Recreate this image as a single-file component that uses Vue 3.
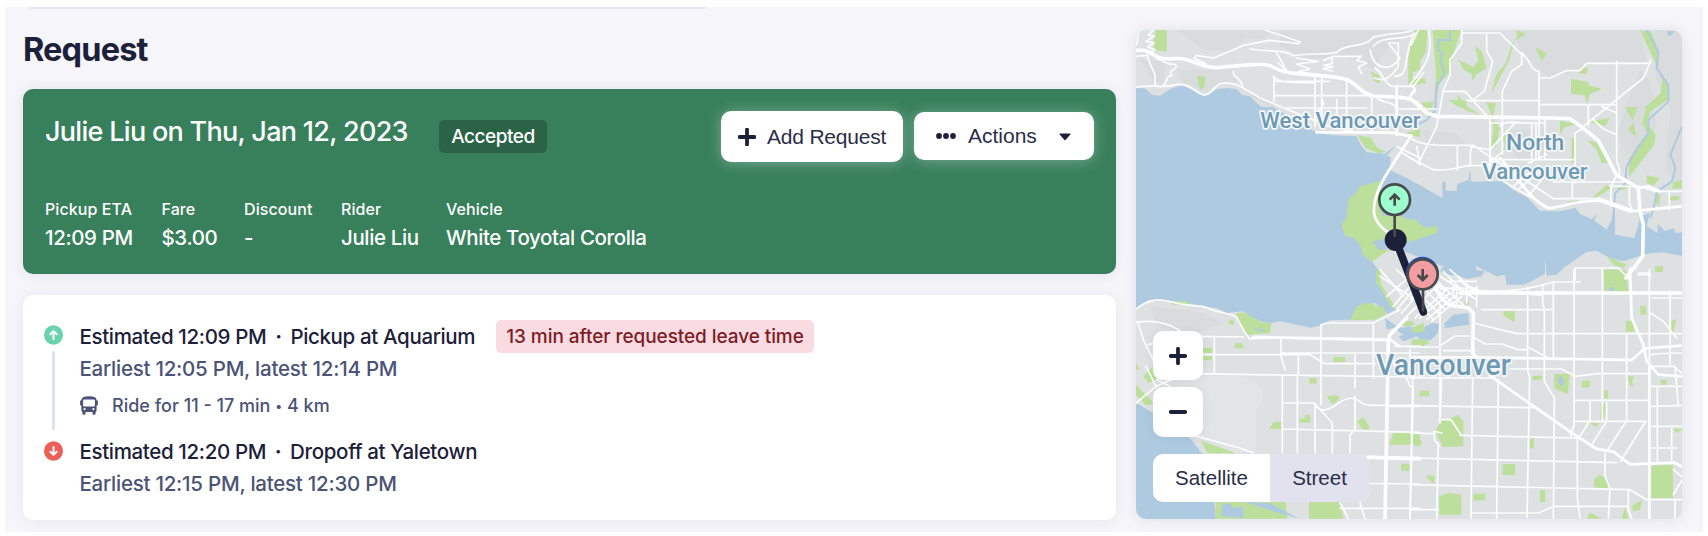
<script setup>
const details = [
  { label: 'Pickup ETA', value: '12:09 PM', width: 88.5 },
  { label: 'Fare', value: '$3.00', width: 54.5 },
  { label: 'Discount', value: '-', width: 69 },
  { label: 'Rider', value: 'Julie Liu', width: 77 },
  { label: 'Vehicle', value: 'White Toyotal Corolla', width: 200 },
]

// Map geometry is split into four tiles, each with its own origin.
const tiles = [
  {
    id: 'nw',
    move: 'translate(0 0)',
    hills: [
      'M170 31 460 31 430 60 380 55 330 95 250 90 210 60Z',
      'M480 31 880 31 800 90 760 150 680 110 560 120 480 80Z',
      'M60 120 140 125 130 190 100 185Z',
      'M170 150 330 150 360 185 300 190 260 215 190 190Z',
      'M365 215 400 235 450 262 480 258 430 235Z',
    ],
    parks: [
      'M108 31h33v65l-40-5V60Z', 'M232 168l24 5-2 28-14 10-6-25Z', 'M48 203l20-2-8 6Z',
      'M748 153l28 14 6 24-18-5-4-14Z', 'M712 346l40 8 20 30 25 12-20 5-40-15Z',
      'M885 50 L900 35V150l-22 8-2 22 24-4v18l-35 2V110Z', 'M860 338l40-10v25l-30-6Z',
      'M785 483 720 500 708 520 685 540 680 590 665 620 675 648 703 655 722 680 730 705 755 727 800 695 840 690 775 690 758 665 800 656 870 664 900 650 950 640 952 622 915 625 885 600 860 598 835 585 790 590 775 560Z',
    ],
    minor: [
      'M60 31c-15 25 0 30-12 45M100 31l-15 15 18 4-25 15 25 5-20 12 22 8-20 12',
      'M48 110l35-3c0 20 15 35 22 60v30M110 118c30 8 35 20 55 15 15 20-25 15-10 35-20 0-10 20-25 28',
      'M48 203c60-10 80 5 120-8 45-5 60 25 80 30 30 5 35-35 62-35 40-2 60 15 110 45l200 83 90 20 120 4',
      'M435 31l106 36-5 5-90-10-75 15-90 38-53-8-5 10 35 15',
      'M390 88c60 10 100 0 130 20 60-10 80 0 130-10 30-30 80-10 110-45 50-15 100-10 118-22',
      'M470 100l15 25 15 30-25-25M530 115l65 10-65 8 40 15-35 8 60 12',
      'M610 122l25-10 2 20-25 5 27 5-30 5 28 7M640 110l85 0-15 12 30 8-25 12 10 20',
      'M750 90c10 60 60 70 90 25l-35-45 30 0 0 70c-20 30-40 50-70 35',
      'M765 145c30 20 20 40 50 55h65l30-40M885 40c-40 60-10 130-60 130M880 45c-40 20-90 0-120 35',
      'M340 155c-5 20 30 20 27 48M462 170v75M462 185h165M462 228h290M500 265h240M460 170c20 25 60 15 120 20M585 170v150M605 170v150M680 180v155M755 225v110M770 232c10 20 50 10 60 35M605 240c20 20-20 30-20 60M650 240v70M830 268h70M880 200l6 15-25 25M830 380l70 35M848 400l52 32M890 380l10 55',
    ],
    major: ['M48 92c60-5 40 30 110 25 60-5 70 25 130 27 80-7 130-14 165-6 45 35 150 20 230 42 45 25 30 35 75 49 90 5 115 0 142 30', 'M590 338h225l45 10 15 0M830 200v145', 'M872 350c-50 85-115 155-110 230 5 30 25 50 60 70'],
  },
  {
    id: 'ne',
    move: 'translate(870 0)',
    hills: [
      'M310 31h380l20 95H530l-35 35-80 10-25-20-60-60Z',
      'M690 150l30 35 20 130-30 60-60 30-30-60 40-120Z',
      'M735 31h81v480l-50-60 15-180-45-100Z',
      'M290 335l100-10 50 30-40 70-80-10Z', 'M30 330l110 10 40 45-130-10Z',
    ],
    parks: [
      'M15 31h38l-5 65-30 50 -18 20V80Z', 'M68 31h85l-25 80-10 50-30 30-15 70 5-100Z', 'M0 180l45-4 2 14-47 4Z', 'M30 250l40-5-5 30Z',
      'M320 31l28 12-35 22-15 55-55 105 15-60 30-35 15-50 20-30Z', 'M145 120l45 22 15-20-10-42 20 15 15 50-32 20-12 20 0-22-25-12Z',
      'M376 82l35 20-15 22-8-14Z', 'M483 178l50 8 5 12 30 8 8 3-35 13-10 30-8-25-40-5Z', 'M505 160l12-18 17 3-5 18Z',
      'M115 240l30 2-5-20 15 18 15 5 0 15 40 25-30-8-45-22Z', 'M228 248l30 3-10 50 22 20-12 60-15 0 8-55-10-50Z', 'M285 335l12 15-20 60-12 0 20-30-10-30Z',
      'M450 303l50 10-35 10-15 20Z', 'M535 305l65-10-15 25Z', 'M485 355h8v75h-8ZM530 360l30 10 35 60-20 0-15-40Z',
      'M690 31l35 5 22 65-3 55 28 30 8 50-60 40-8 35 25 35-5 30-75 95 0-55 55-75-15-30 10-50 45-40 5-40-25-60Z',
      'M645 262h38l-15 40 12 50-25-20 15-25Z', 'M710 466l40 10-20 22-20-8ZM790 488l26-8v25l-30 3ZM780 530h28v12h-28ZM736 520l16 5-5 35-10-10Z', 'M590 495l-45 40 20-5 40-25ZM610 502l60-10-30 20ZM465 550l40-10-10 8Z',
      'M0 600l45 25 37-6-2 22-80 25Z', 'M590 710l60 25-10 10-30-10ZM735 740h24v17h-24Z', 'M582 750h60v28h-60Z',
    ],
    minor: [
      'M55 31c20 80-20 120-55 165M25 31L5 75M155 31v40l-35 50 0 45-20 45-20 110-55 110M155 40h115l65 65v30l-30 20-28 60v190M230 40v55l18 30-25 90-40 30',
      'M335 100c35 30 20 50 52 55v265M390 175h30l50-22h40l20-22h190l2-10M620 125v300l8 20v20M720 130l-20 45-180 145M100 215h65l75 85v160M170 243h220M390 255h230M535 258v60M550 300l30 28 35 15M495 490V340l20-12M575 260l45 20M0 195l15 12-15 20M0 268h80',
      'M240 310h160M270 320c15-20 50-10 95-10v120M378 310v110M405 300v120M240 420h255M0 355c40 25 80 22 190 22l60 40 180 120h140l110 38M180 380l60 10v55M142 380v70M0 415l70 35c50 5 60-5 105-12h60M185 385c-10 20 0 30-5 50M280 395l-60 50M240 390l75-80M430 487h220M487 487v45M603 560v-60l15-30M658 500v50l10 25M778 515v55M600 500h90l45 15h81M355 430l55-25M310 500l70-60M325 510l75-65M355 530l60-75M280 485l130 75',
      'M685 573l131-15M495 780v-35h130l35 35M660 745h20M685 765h35',
    ],
    major: ['M0 235l50 45 30 10 350 5 50 2 35 25 50 40 55 105 65 38 5 70 10 40-2 95-50 65', 'M270 415c50 55 110 150 150 150 50-5 70-22 150-22l90 32 156-15M685 505l30-5 35 15'],
  },
  {
    id: 'sw',
    move: 'translate(0 750)',
    hills: ['M90 110l160 20 60 30-80 30-120-20Z'],
    parks: [
      'M145 95h55l10 8-50 2Z', 'M345 133l25-5 60 32 25 0-5 30-70 6-15-28Z', 'M327 150h14v15h-14Z', 'M343 220h22l8 16h-28Z',
      'M240 235h37v14h-37ZM245 258h30v14h-30Z', 'M640 262h35v15h-35ZM568 325h22v17h-22ZM620 378l38 0-3 12-18 15Z', 'M536 448l18-2 0-10h17v23h-30Z', 'M448 477l13-20h22v22ZM712 455l18-12 18 28-3 10-20-4Z',
      'M820 490h80v35h-92ZM843 583h25v20h-25Z', 'M243 513l105 38h-85ZM287 695h210l5 52H287Z', 'M567 695h95l8 52H567Z', 'M690 152l20-42 25-10 30 2 0 8 25 0 6 25-30 15Z', 'M48 345l55 57-25 5-30-30ZM70 320l30-30 10 40-25 10Z',
      'M770 0h12v40l48 80-15-5-35-60-12-15ZM835 158l40-5 10 12-30 6ZM48 280l10 20-10 0Z', 'M875 210l40-2 15 15-55 2Z',
    ],
    minor: [
      'M48 118c70-55 90-10 200-8 60 25 80 20 100 30l25 45 15 22 75-2 345 8M48 158c85-12 130 22 150 40M52 155l20 60 30 60M78 290l30 60M48 400l60-50 90-40M110 330l40 20M85 225l60-15M210 200l160 2',
      'M235 255h335l25 15 20 12 150 0M205 312l695 10M283 205v105M483 205v55l12 40M487 320v230M532 320v230M535 255v60M603 165v240M605 165l15-5h140v165M705 255v100M705 380v100l-15 15v55M482 250h415M487 400h95l55 60v90M585 400v150M580 400c40 55 70-15 115-15 40 10 20 20 60 22h145M487 478l413 10M745 560l155 5M600 640l300 3M660 716h240M660 700l25 47M720 700l15 47M230 500l130 35 40 15M802 410h98M820 270c0 45 40 35 50 80l10 0-10 397M760 160l80-40M825 230h75',
      'M780 20l120 80M780 0l70 80M820 110l50-60M830 0l70 65M800 80l70-60M830 120l60-70M845 130l55-65M860 140l40-40',
    ],
    major: ['M860 145l-50 50-5 15-10 537M745 563l155 4', 'M400 202l410 8 30 20'],
  },
  {
    id: 'se',
    move: 'translate(870 750)',
    hills: [],
    parks: [
      'M280 125h35l-2 33-32-20ZM163 97l14-2v10h-14Z', 'M583 0h65l7 65h-72ZM690 110h17l3 25h-18ZM648 153h20l5 33h-25ZM785 152l14-3-10 45h-5Z', 'M5 175l35-15 5 25-35 5ZM5 210h48l-10 18-35-3Z',
      'M432 314l48-2-7 62-40-18ZM516 333h24v20h-24ZM367 318h30v12h-30ZM652 320h20l-6 15 5 18-10-5ZM582 362h12v25h-12ZM573 400l14 5-4 40-12 5Z', 'M752 330l18 0v15h-18ZM538 460l30 0-10 12Z',
      'M30 363h28v17H28Z', 'M75 485l20-35 20 0 28-15 17 20v75l-62 2Z', 'M12 512h22v16H12ZM360 508l12-4v32h-12ZM278 583h37v33h-37ZM48 618h25v24l-15-10Z', 'M88 680l30-10 36 5v60H88ZM190 672h36v20h-36ZM390 662h15v35h-15Z',
      'M552 630l15-15 20 10 8 32-43-5ZM530 747l10-18 35 18ZM635 747l10-35 10 35ZM665 710l30-20-5 30-20 5Z', 'M724 588l65-3v100h-65ZM790 477h28l-20 14Z', 'M735 0h24v7h-24Z',
    ],
    minor: [
      'M185 68h230M100 55c150 20 260 5 330-18h80M215 120h215M100 5l60 60M190 160l130 32h496M195 205l30 18h50l50 17h25M100 243h95M0 232h85l50-33h55M120 0l80 70M0 240v27M90 110v350M200 50v60',
      'M353 55v250l6 18-8 420M398 45v60l5 10v220l30 50-3 362M430 37v230M492 0v465l-10 35M577 0v450M350 230l70 38M650 195v260M718 0v350M780 65v220M720 130l40 25 40 50M725 85h91M685 10h35v10',
      'M300 298h155l40 22 70-8h155M0 325h250M0 408l370 6M0 490l70 2M150 497l350 8M0 565l620 14M0 645l660 15 50 30h106M0 720h85M185 730h200l45-20h225',
      'M265 330l-5 417M188 325l-5 420M95 325l-5 120M85 520l-5 227M8 325l-8 422M492 392h225M540 395v60M590 400v55l-45 70M492 455h215l-75 120M645 460l-55 85M535 460l-25 40M502 505v180l8 60M585 550v70l15 35-5 90M655 660v60l10 27',
      'M720 350h96M720 410l96-3M720 470h96M720 535h80M742 350v225M785 475v100M795 290l10 120M730 290h60l26 20M720 255c30-5 60-5 96-5M790 600l30 25-30 50M795 690v57',
      'M95 490l-22-5 0 25 15 20M88 450h35l30 45M0 130l90-90M15 145l95-85M0 90l70-65M30 145l90-75M50 150l90-75M65 155l90-75M75 30l85 75M65 45l75 65M45 60l60 60M35 80l55 55M20 95l50 55M90 20l110 70M110 35h90M110 55h90M140 65v40M170 55v45M130 45v40',
    ],
    major: ['M150 70h666M105 60c-30-20-35-10-20 10 30 50 50 35 90 45l15 15-2 120 10 12', 'M0 263h190l475 8 40-35 111-8M240 318l250 175 70 45 50 8 50 38 135-5 21 12', 'M660 0l5 145 35 80 10 50 35 40 71 5M718 295v450', 'M150 30c50 55 100 30 240 45'],
  },
]
</script>

<template>
  <div class="page">
    <main class="shell">
      <div class="top-rule"></div>
      <div class="content">
        <h1>Request</h1>

        <section class="summary">
          <div class="summary-head">
            <h2>Julie Liu on Thu, Jan 12, 2023</h2>
            <span class="status">Accepted</span>
            <button class="btn add">
              <svg width="18" height="18" viewBox="0 0 18 18"><path d="M9 1.5v15M1.5 9h15" /></svg>
              <span>Add Request</span>
            </button>
            <button class="btn actions">
              <svg class="dots" width="20" height="8" viewBox="0 0 20 8"><circle cx="3" cy="4" r="2.9" /><circle cx="10" cy="4" r="2.9" /><circle cx="17" cy="4" r="2.9" /></svg>
              <span>Actions</span>
              <svg class="caret" width="12" height="8" viewBox="0 0 12 8"><path d="M1 .5h10q1 0 .3.9L6.8 6.8q-.8.8-1.6 0L.7 1.4Q0 .5 1 .5Z" /></svg>
            </button>
          </div>
          <dl class="details">
            <div v-for="d in details" :key="d.label" :style="{ width: d.width + 'px' }">
              <dt>{{ d.label }}</dt>
              <dd>{{ d.value }}</dd>
            </div>
          </dl>
        </section>

        <section class="trip">
          <div class="rail">
            <svg width="19" height="20" viewBox="0 0 19 20"><ellipse cx="9.5" cy="10" rx="9.5" ry="9.8" fill="#6ad3ae" /><path d="M9.5 14V6.2M6.3 9.3l3.2-3.2 3.2 3.2" class="arrow" /></svg>
            <i></i>
            <svg width="19" height="20" viewBox="0 0 19 20"><ellipse cx="9.5" cy="10" rx="9.5" ry="9.8" fill="#ea6058" /><path d="M9.5 6v7.8M6.3 10.7l3.2 3.2 3.2-3.2" class="arrow" /></svg>
          </div>
          <div class="stops">
            <div class="stop">
              <span class="stop-title">Estimated 12:09 PM<b>·</b>Pickup at Aquarium</span>
              <span class="late">13 min after requested leave time</span>
            </div>
            <div class="window">Earliest 12:05 PM, latest 12:14 PM</div>
            <div class="ride">
              <svg width="18" height="19" viewBox="0 0 18 19"><path fill-rule="evenodd" d="M3 1.200Q5 .2 9 .2T15 1.200Q16.600 2 16.600 4.200Q17.900 4.200 17.900 5.400V8.400Q17.900 9.600 16.600 9.600V14.600Q16.600 15.600 15.600 16V17.500q0 1.200-1.200 1.200H13.700q-1.200 0-1.200-1.200V16H5.500v1.500q0 1.200-1.200 1.200H3.600q-1.200 0-1.200-1.200V16Q1.400 15.600 1.400 14.600V9.600Q.1 9.600 .1 8.400V5.400Q.1 4.200 1.400 4.200 1.400 2 3 1.200ZM4.200 3.400Q3.100 3.400 3.100 4.500V9.400q0 1.100 1.100 1.100h9.600q1.100 0 1.100-1.100V4.500q0-1.100-1.100-1.100ZM4.600 12a1.100 1.100 0 100 2.200 1.100 1.100 0 000-2.200ZM13.400 12a1.100 1.100 0 100 2.200 1.100 1.100 0 000-2.200Z" /></svg>
              <span>Ride for 11 - 17 min <small>•</small> 4 km</span>
            </div>
            <div class="stop second"><span class="stop-title">Estimated 12:20 PM<b>·</b>Dropoff at Yaletown</span></div>
            <div class="window">Earliest 12:15 PM, latest 12:30 PM</div>
          </div>
        </section>
      </div>

      <aside class="map">
        <svg class="canvas" viewBox="48 31 1638 1467" preserveAspectRatio="none">
          <rect x="0" y="0" width="1800" height="1600" fill="#dde1e2" />
          <path d="M200 1070h175l55 35-5 50-18 15v130h-60l-110-50-45-50-30-90Z" fill="#e2e5e5" />
          <g v-for="t in tiles" :key="'h' + t.id" :transform="t.move"><path v-for="(p, i) in t.hills" :key="i" :d="p" class="hill" /></g>
          <g class="water">
            <path d="M48 204 75 206 95 225 120 228 150 208 185 197 215 210 245 227 265 226 290 208 320 205 350 208 365 225 390 230 410 250 425 262 460 262 490 280 520 300 560 320 590 340 640 347 710 350 722 375 740 398 795 402 830 375 800 408 812 412 812 452 860 475 900 497 967 535 967 487 977 485 977 513 1010 514 1012 492 1045 482 1050 448 1054 486 1150 485 1180 512 1220 532 1260 573 1320 575 1367 565 1380 583 1415 598 1432 583 1422 602 1460 630 1475 600 1485 540 1485 645 1542 655 1555 620 1560 590 1590 580 1580 620 1612 640 1614 612 1635 635 1660 625 1668 640 1686 638V708L1625 698 1575 703 1550 712 1510 725 1470 715 1430 693 1400 697 1360 725 1330 745 1310 765 1280 768 1275 710 1275 762 1225 790 1210 795 1160 795 1155 765 1130 770 1080 745 1068 738 1070 765 1030 770 985 765 1000 772 960 755 970 740 920 720 870 702 820 685 790 690 755 725 775 750 772 785 800 830 828 870 800 882 765 850 720 860 700 900 630 902 605 916 575 924 530 915 480 905 455 910 430 908 400 895 370 875 320 880 290 865 240 860 200 850 150 845 85 842 48 870Z" />
            <path d="M48 1150 100 1180 150 1220 210 1255 245 1300 265 1400 283 1450 288 1498H48Z" />
            <path d="M795 895 815 910 845 925 870 920 900 930 935 910 958 912 954 938 935 960 905 965 890 950 850 965 835 950 850 945 820 925 800 930Z" />
            <path d="M972 912 1000 885 1045 880 1047 915 1010 920 975 926Z" />
            <path d="M980 755 1095 752 1085 770 1040 778 1010 765ZM1155 745 1225 745 1215 780 1190 778 1180 795 1160 785ZM1275 745 1325 745 1310 762Z" />
          </g>
          <g v-for="t in tiles" :key="'p' + t.id" :transform="t.move"><path v-for="(p, i) in t.parks" :key="i" :d="p" class="park" /></g>
          <g class="water">
            <path d="M1314 1075 1325 1070 1332 1088 1326 1102 1316 1090ZM1468 803h12v12h-12ZM305 1455l25-5 10 15 30-5 0 35-65-5ZM370 1446l80 5 85 45-70-20Z" />
            <path d="M398 925l40 6-15 6ZM1640 35l25 0-18 16Z" />
          </g>
          <g class="river">
            <path d="M990 31v30l-35 0 0 30 12 10-5 20 12 40-25 40-3 70-25 30-40 20" />
            <path d="M1580 31l35 65-5 50 35 50 0 50-60 55 0 40-30 40-35 60-5 50-30 30-5 80" />
            <path d="M1686 320l-35 85 15 40-10 40-45 30-10 50-10 30" />
          </g>
          <g v-for="t in tiles" :key="'r' + t.id" :transform="t.move" class="roads">
            <path v-for="(p, i) in t.minor" :key="i" :d="p" class="minor" />
            <path v-for="(p, i) in t.major" :key="'m' + i" :d="p" :class="['major', { wide: i === 0 }]" />
          </g>
          <g class="labels">
            <text x="421" y="326" font-size="66" textLength="481" lengthAdjust="spacingAndGlyphs">West Vancouver</text>
            <text x="1158" y="392" font-size="66" textLength="175" lengthAdjust="spacingAndGlyphs">North</text>
            <text x="1087" y="478" font-size="66" textLength="316" lengthAdjust="spacingAndGlyphs">Vancouver</text>
            <text x="768" y="1067" font-size="88" textLength="404" lengthAdjust="spacingAndGlyphs">Vancouver</text>
          </g>
          <path d="M827 661 910 877" stroke="#1c2039" stroke-width="23" stroke-linecap="round" />
          <circle cx="827" cy="661" r="33" fill="#1c2039" />
          <g class="pin">
            <path d="M824 590v58" />
            <circle cx="824" cy="540" r="46" fill="#9dffcd" />
            <path class="glyph" d="M824 558v-33M809 540l15-15 15 15" />
          </g>
          <circle cx="907" cy="760" r="49" fill="#244fbf" />
          <g class="pin">
            <path d="M909 812v60" />
            <circle cx="908" cy="764" r="45" fill="#f19da1" />
            <path class="glyph" d="M908 748v33M893 766l15 15 15-15" />
          </g>
        </svg>
        <div class="controls">
          <button class="zoom"><svg width="18" height="18" viewBox="0 0 18 18"><path d="M9 1.800v14.400M1.800 9h14.400" /></svg></button>
          <button class="zoom"><svg width="18" height="18" viewBox="0 0 18 18"><path d="M1.800 9h14.400" /></svg></button>
          <div class="toggle"><span>Satellite</span><span class="on">Street</span></div>
        </div>
      </aside>
    </main>
  </div>
</template>

<style>
body { margin: 0; background: #fff; overflow: hidden; }
</style>

<style scoped>
* { box-sizing: border-box; }
.page { height: 536px; padding: 7px 5px 4px; background: #fff; font-family: Inter, "Liberation Sans", sans-serif; color: #1c2039; white-space: nowrap; }
.shell { position: relative; height: 525px; background: #f5f5fa; display: flex; padding-left: 18px; gap: 20px; }
.top-rule { position: absolute; left: 24px; top: 0; width: 677px; height: 2px; background: #e3e5f2; border-radius: 0 0 4px 4px; }
.content { width: 1093px; display: flex; flex-direction: column; }
h1 { margin: 0; height: 82px; padding-top: 23px; font-size: 32.5px; line-height: 40px; font-weight: 650; letter-spacing: -0.85px; }
.summary { height: 185px; border-radius: 10px; background: #38805c; color: #fff; padding: 22px 22px 0 22px; box-shadow: 0 1px 14px rgba(40, 40, 70, .09); }
.summary-head { display: flex; align-items: flex-start; height: 87px; }
h2 { margin: 0; width: 394px; font-size: 27px; line-height: 42px; font-weight: 550; letter-spacing: -0.7px; }
.status { margin-top: 9px; width: 108px; height: 33px; line-height: 34px; text-align: center; background: #2b6347; border-radius: 5px; font-size: 19px; font-weight: 500; letter-spacing: -.45px; }
.btn { border: 0; background: #fff; border-radius: 10px; color: #2a2d48; font: 21px "Liberation Sans", Arial, sans-serif; display: flex; align-items: center; box-shadow: 0 1px 14px rgba(255, 255, 255, .32); padding: 0; }
.btn svg { flex: none; fill: #1c2039; }
.add { margin-left: 174px; width: 182px; height: 51px; padding-left: 17px; gap: 11px; letter-spacing: -.2px; }
.add svg, .zoom svg { stroke: #1c2039; stroke-width: 3.8; stroke-linecap: round; }
.actions { margin: 1px 0 0 11px; width: 180px; height: 48px; padding-left: 22px; }
.actions span { margin: 0 22px 0 12px; }
.actions .caret { margin-top: 1px; }
.details { margin: 0; display: flex; gap: 28px; }
dt { font-size: 16px; line-height: 22px; letter-spacing: .08px; font-weight: 450; }
dd { margin: 3px 0 0; font-size: 20.5px; line-height: 29px; letter-spacing: -.38px; font-weight: 450; }
.trip { margin-top: 20.500px; height: 225px; border-radius: 10px; background: #fff; box-shadow: 0 1px 14px rgba(40, 40, 70, .07); display: flex; padding: 30.500px 0 0 21px; }
.rail { width: 19px; display: flex; flex-direction: column; align-items: center; }
.rail i { width: 3px; height: 79px; margin: 6px 0 11px; background: #e0e3ee; border-radius: 2px; }
.rail svg { display: block; flex: none; }
.arrow { fill: none; stroke: #fff; stroke-width: 2; stroke-linecap: round; stroke-linejoin: round; }
.stops { margin-left: 16.500px; margin-top: -5px; font-size: 20.5px; font-weight: 450; }
.stop { display: flex; height: 33px; align-items: center; }
.stop-title { width: 416.500px; letter-spacing: -.35px; }
.stop-title b { display: inline-block; width: 24px; text-align: center; font-weight: 700; }
.late { width: 318px; height: 33px; line-height: 33px; text-align: center; background: #f9dbe1; color: #7e1b25; border-radius: 5px; font-size: 19px; letter-spacing: -.07px; }
.window { color: #4b5377; line-height: 31px; letter-spacing: -.24px; }
.ride { display: flex; align-items: center; gap: 14.500px; height: 43px; margin-bottom: 1px; color: #4b5377; font-size: 18px; fill: #4b5377; }
.ride small { font-size: 13px; vertical-align: 1px; }
.second { margin-top: 8px; }
.map { position: relative; width: 546px; height: 489px; margin-top: 23px; border-radius: 10px; overflow: hidden; box-shadow: 0 1px 14px rgba(40, 40, 70, .1); }
.canvas { display: block; width: 546px; height: 489px; }
.hill { fill: #d6d9da; opacity: .6; }
.water { fill: #aecae0; }
.park { fill: #bcdf9c; }
.river path { fill: none; stroke: #aecae0; stroke-width: 6; }
.roads path { fill: none; stroke: #fdfefe; stroke-linejoin: round; stroke-linecap: round; }
.roads .minor { stroke-width: 5.2; opacity: .95; }
.roads .major { stroke-width: 8.5; }
.roads .wide { stroke-width: 11; }
.labels text { font-family: Roboto, sans-serif; font-weight: 500; fill: #6f98b3; stroke: #f4f8fa; stroke-width: 10; stroke-linejoin: round; paint-order: stroke; }
.pin { stroke: #484b4c; stroke-width: 8; fill: none; stroke-linecap: round; stroke-linejoin: round; }
.pin .glyph { stroke-width: 8; stroke-linecap: butt; stroke-linejoin: miter; }
.controls { position: absolute; left: 17px; bottom: 17px; display: flex; flex-direction: column; }
.zoom { width: 50px; height: 49px; margin-bottom: 7px; border: 0; border-radius: 10px; background: #fff; display: flex; align-items: center; justify-content: center; padding: 0; box-shadow: 0 1px 10px rgba(40, 40, 70, .07); }
.zoom + .zoom { height: 50px; margin-bottom: 17px; }
.toggle { display: flex; width: 216px; height: 48px; border-radius: 10px; overflow: hidden; background: #fff; color: #2a2d48; font: 20.5px/48px "Liberation Sans", Arial, sans-serif; text-align: center; }
.toggle span { width: 117px; }
.toggle .on { width: 99px; background: #e2e2ef; }
</style>
